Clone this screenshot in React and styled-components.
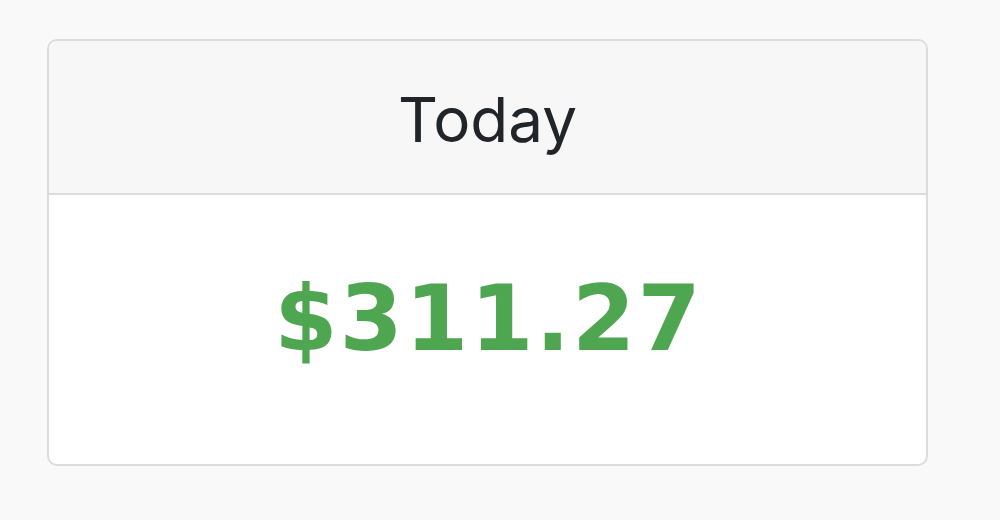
import React from 'react'
import styled, { createGlobalStyle } from 'styled-components'

const GlobalStyle = createGlobalStyle`
    html, body {
        margin: 0;
        background: #f9f9f9;
    }
`

const Page = styled.div`
    width: 1000px;
    height: 520px;
    box-sizing: border-box;
    padding: 39px 0 0 47px;
`

const Card = styled.div`
    width: 881px;
    height: 427px;
    box-sizing: border-box;
    display: flex;
    flex-direction: column;
    background: #ffffff;
    border: 2px solid #dcdcdc;
    border-radius: 10px;
    overflow: hidden;
`

const CardHeader = styled.div`
    height: 154px;
    flex-shrink: 0;
    box-sizing: border-box;
    display: flex;
    align-items: center;
    justify-content: center;
    background: #f7f7f7;
    border-bottom: 2px solid #dcdcdc;
    color: #212529;
    font-family: Inter, "Liberation Sans", sans-serif;
    font-size: 62px;
    padding-top: 4px;
`

const CardBody = styled.div`
    flex: 1;
    display: flex;
    align-items: center;
    justify-content: center;
    padding-bottom: 22px;
`

const Amount = styled.div`
    color: ${props => props.positive ? '#4fa650' : '#d9534f'};
    font-family: "DejaVu Sans", Verdana, sans-serif;
    font-weight: bold;
    font-size: 91px;
    letter-spacing: 2px;
    margin-right: -2px;
`

function App() {
  return (
    <Page>
        <GlobalStyle />
        <Card>
            <CardHeader>Today</CardHeader>
            <CardBody>
                <Amount positive>$311.27</Amount>
            </CardBody>
        </Card>
    </Page>
  )
}

export default App
